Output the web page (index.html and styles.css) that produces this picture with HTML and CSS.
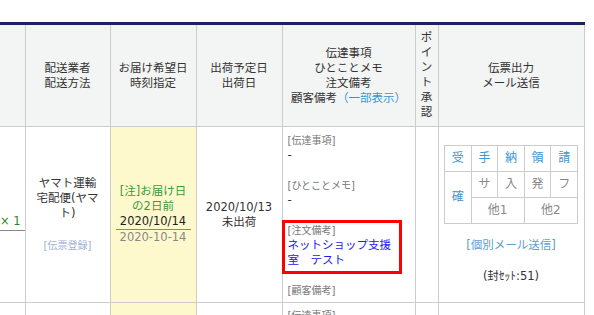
FILE: index.html
```html
<!DOCTYPE html>
<html lang="ja">
<head>
<meta charset="utf-8">
<title>受注一覧</title>
<link rel="stylesheet" href="styles.css">
</head>
<body>
<div class="page">
  <table class="orders">
    <colgroup>
      <col class="w-qty"><col class="w-ship"><col class="w-date"><col class="w-out"><col class="w-memo"><col class="w-point"><col class="w-slip">
    </colgroup>
    <thead>
      <tr class="head-row">
        <th class="first"></th>
        <th>配送業者<br>配送方法</th>
        <th>お届け希望日<br>時刻指定</th>
        <th>出荷予定日<br>出荷日</th>
        <th>伝達事項<br>ひとことメモ<br>注文備考<br>顧客備考<a class="head-link">（一部表示）</a></th>
        <th class="vert">ポ<br>イ<br>ン<br>ト<br>承<br>認</th>
        <th>伝票出力<br>メール送信</th>
      </tr>
    </thead>
    <tbody>
      <tr class="order-row">
        <td class="first"><div class="qty-wrap"><span class="qty">× 1</span></div></td>
        <td class="center">ヤマト運輸<br>宅配便(ヤマ<br>ト)<div class="slip-reg">[伝票登録]</div></td>
        <td class="center wish">
          <div class="note">[注]お届け日<br>の2日前</div>
          <div class="wish-date">2020/10/14</div>
          <div class="wish-sub">2020-10-14</div>
        </td>
        <td class="center">2020/10/13<br>未出荷</td>
        <td class="memo">
          <div class="sec"><div class="lbl">[伝達事項]</div><div>-</div></div>
          <div class="sec"><div class="lbl">[ひとことメモ]</div><div>-</div></div>
          <div class="sec hl"><div class="lbl">[注文備考]</div><div class="blue">ネットショップ支援<br>室　テスト</div><span class="redbox"></span></div>
          <div class="sec last"><div class="lbl">[顧客備考]</div></div>
        </td>
        <td></td>
        <td class="center">
          <table class="mini">
            <tr><td class="on">受</td><td class="on">手</td><td class="on">納</td><td class="on">領</td><td class="on">請</td></tr>
            <tr><td class="on" rowspan="2">確</td><td>サ</td><td>入</td><td>発</td><td>フ</td></tr>
            <tr><td colspan="2">他1</td><td colspan="2">他2</td></tr>
          </table>
          <div class="mail-link">[個別メール送信]</div>
          <div class="count">(封ｾｯﾄ:51)</div>
        </td>
      </tr>
      <tr class="next-row">
        <td class="first"></td>
        <td></td>
        <td class="wish"></td>
        <td></td>
        <td class="memo"><div class="lbl">[伝達事項]</div></td>
        <td></td>
        <td></td>
      </tr>
    </tbody>
  </table>
</div>
</body>
</html>
```

FILE: styles.css
```css
html, body {
  margin: 0;
  padding: 0;
  background: #ffffff;
  overflow: hidden;
}

body {
  font-family: "DejaVu Sans", "Noto Sans CJK JP", sans-serif;
  font-size: 11.5px;
  line-height: 15px;
  color: #333333;
}

.page {
  padding-top: 22px;
}

.orders {
  border-collapse: collapse;
  table-layout: fixed;
  width: 584px;
  border-top: 3px solid #1c2160;
}

.w-qty { width: 25px; }
.w-ship { width: 85px; }
.w-date { width: 86px; }
.w-out { width: 86px; }
.w-memo { width: 133px; }
.w-point { width: 23px; }
.w-slip { width: 146px; }

.orders > thead > tr > th,
.orders > tbody > tr > td {
  border: 1px solid #cccccc;
  padding: 0;
}

.orders th.first,
.orders td.first {
  border-left: none;
}

.head-row {
  height: 103px;
}

.head-row th {
  background: #f3f4f4;
  font-weight: normal;
  text-align: center;
  vertical-align: middle;
}

.head-row th.vert {
  vertical-align: top;
  padding-top: 5px;
}

.head-link {
  color: #3a94d0;
}

.order-row {
  height: 176px;
}

.order-row td {
  vertical-align: middle;
}

.center {
  text-align: center;
}

.qty-wrap {
  display: flex;
  justify-content: flex-end;
  margin-top: 16px;
}

.qty {
  flex-shrink: 0;
  white-space: nowrap;
  color: #1f8a1f;
  font-size: 11.5px;
  padding-right: 4px;
  padding-bottom: 1px;
  border-bottom: 1px solid #888888;
}

.slip-reg {
  margin-top: 17px;
  font-size: 10px;
  color: #9fb2d4;
}

.wish {
  background: #fef9cd;
}

.order-row td.wish {
  padding: 0 5px;
}

.note {
  color: #3a9a3a;
}

.wish-date {
  color: #222222;
  border-bottom: 1px solid #888888;
}

.wish-sub {
  color: #888888;
}

.memo {
  padding: 0 5px !important;
  vertical-align: top !important;
}

.order-row td.memo {
  padding-top: 6px !important;
}

.lbl {
  font-size: 10px;
  color: #777777;
}

.sec {
  position: relative;
  margin-bottom: 15px;
}

.sec.last {
  margin-bottom: 0;
}

.blue {
  color: #1b1bea;
}

.redbox {
  position: absolute;
  top: -3px;
  left: -6px;
  width: 120px;
  height: 54px;
  box-sizing: border-box;
  border: 3px solid #ff0000;
}

.mini {
  border-collapse: collapse;
  width: 134px;
  margin: 0 auto;
}

.mini td {
  border: 1px solid #cccccc;
  height: 25px;
  padding: 0;
  text-align: center;
  color: #888888;
  font-size: 12px;
}

.mini td.on {
  color: #3c96d2;
}

.mail-link {
  margin-top: 14px;
  color: #5a9fd2;
}

.count {
  margin-top: 16px;
  color: #333333;
}

.next-row {
  height: 30px;
}

.next-row td {
  vertical-align: top;
}

.next-row td.memo {
  padding-top: 5px !important;
}
```
